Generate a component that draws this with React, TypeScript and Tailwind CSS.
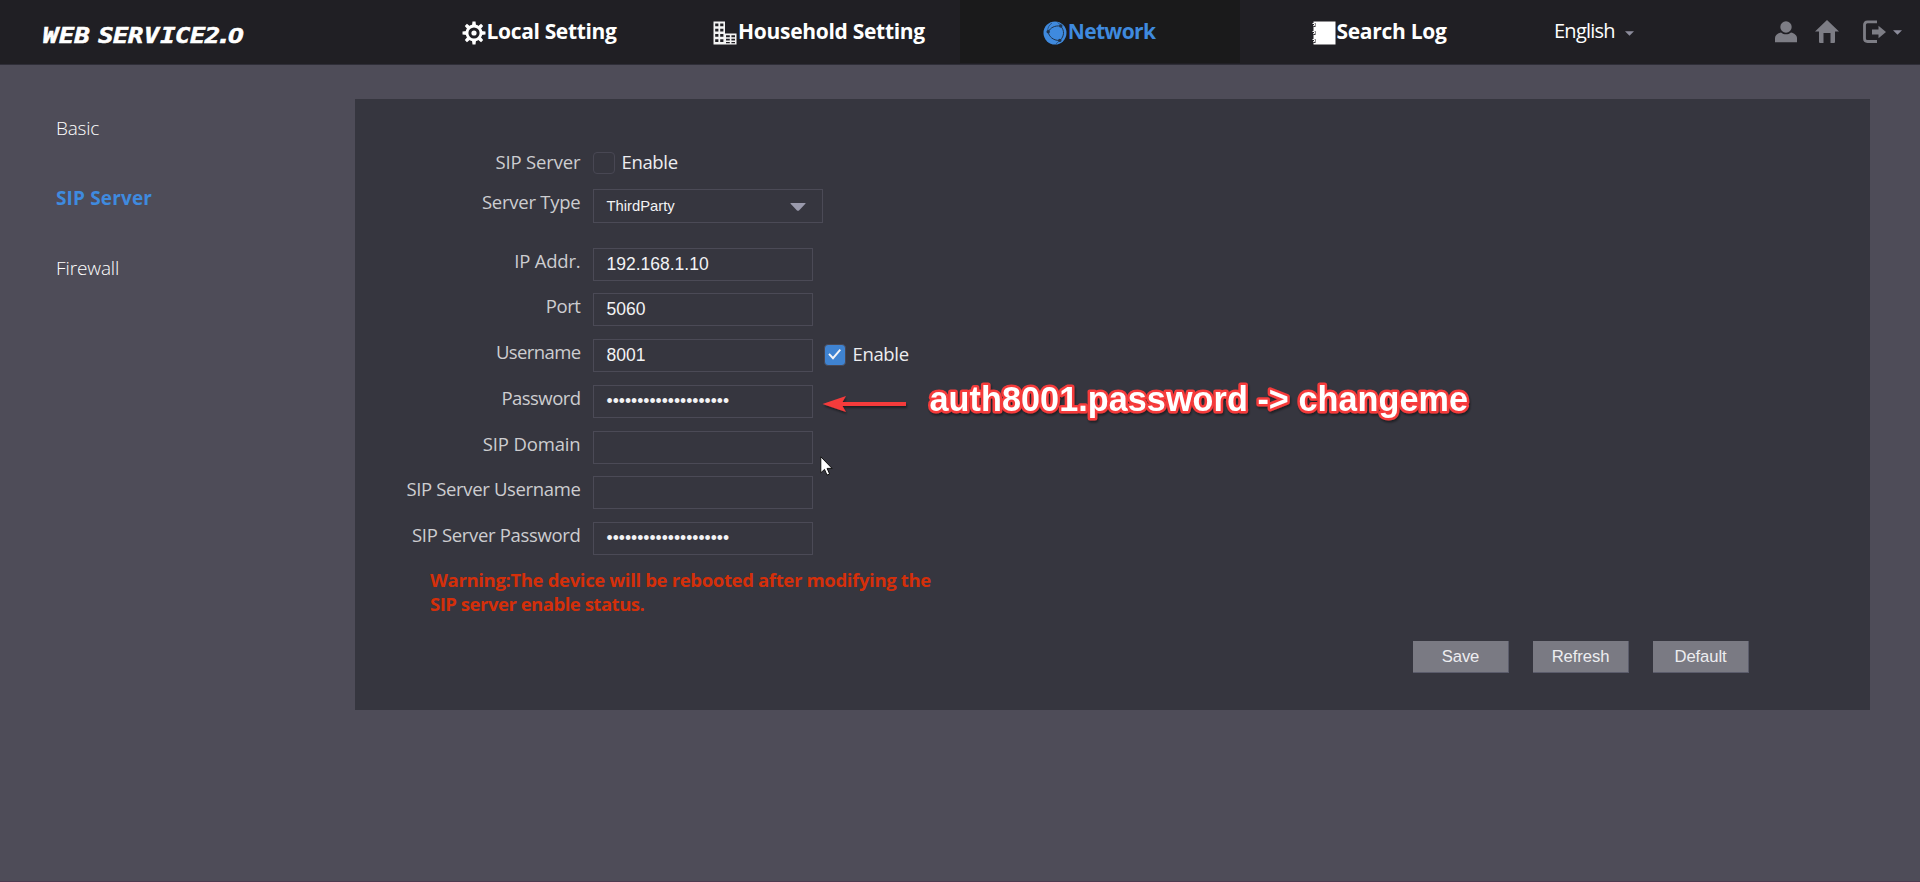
import type { ReactNode } from "react";

const OPEN = "font-['Open_Sans','Noto_Sans',sans-serif]";
const ARIAL = "font-['Liberation_Sans',Arial,sans-serif]";

function Logo() {
  return (
    <svg width="212" height="24" viewBox="0 0 212 24" className="block overflow-visible" fill="#fff">
      <text
        y="19.700"
        transform="scale(1.24 1)"
        fontFamily="DejaVu Sans Mono"
        fontWeight="700"
        fontStyle="oblique"
        fontSize="20.5"
        stroke="#fff"
        strokeWidth="0.6"
        x="0 13 25.500 38 44.500 56.500 68.500 81.500 94.500 106.500 118.500 130.500 142 149"
      >
        WEB SERVICE2<tspan fontFamily="DejaVu Sans">.</tspan>
        <tspan fontFamily="Liberation Sans" fontStyle="italic" fontSize="22.5">0</tspan>
      </text>
    </svg>
  );
}

function GearIcon() {
  const teeth = [0, 45, 90, 135, 180, 225, 270, 315];
  return (
    <svg width="24" height="24" viewBox="0 0 24 24" fill="none">
      <circle cx="12" cy="12" r="7" stroke="#fff" strokeWidth="2.8" />
      <circle cx="12" cy="12" r="2.6" fill="#fff" />
      {teeth.map((a) => (
        <path key={a} d="M10 4.800 10.500 0.500h3l0.500 4.300z" fill="#fff" transform={`rotate(${a} 12 12)`} />
      ))}
    </svg>
  );
}

function BuildingIcon() {
  return (
    <svg width="24" height="24" viewBox="0 0 24 24" fill="none">
      <path
        fill="#f4f4f4"
        fillRule="evenodd"
        d="M0.500 0.500h11.500v23h-11.500zM2.200 2.500v2.800h3.200v-2.800zM7.200 2.500v2.800h3.200v-2.800zM2.200 7.700v2.800h3.200v-2.800zM7.200 7.700v2.800h3.200v-2.800zM2.200 13v2.800h3.200v-2.800zM7.200 13v2.800h3.200v-2.800zM2.200 18.200v2.800h3.200v-2.800zM7.200 18.200v2.800h3.200v-2.800z"
      />
      <path
        fill="#f4f4f4"
        fillRule="evenodd"
        d="M12 12.500h11.500v11h-11.500zM13 14.200v2h3.800v-2zM18.400 14.200v2h3.600v-2zM13 17.800v1.600h3.800v-1.600zM18.400 17.800v1.600h3.600v-1.600zM13 21v1.200h3.800v-1.200zM18.400 21v1.200h3.600v-1.200z"
      />
    </svg>
  );
}

function GlobeIcon() {
  return (
    <svg width="24" height="24" viewBox="0 0 24 24" fill="none">
      <circle cx="12" cy="12" r="11.500" fill="#3f8ade" />
      <g stroke="#20344d" strokeWidth="1">
        <path d="M5.500 10.500C7.500 6.500 12 4.500 17 5" />
        <path d="M5.200 11C6 15.500 10 19.500 16.500 19.500" />
        <path d="M18 5.500C21.500 9.500 21.500 15 17 19.500" />
        <path d="M4.800 10C4.500 7 6 4 9 2" strokeWidth="0.600" />
        <path d="M18.500 4.500 14.500 1.500" strokeWidth="0.600" />
        <path d="M17 19.500 13 22.800" strokeWidth="0.600" />
      </g>
      <g fill="#20344d">
        <circle cx="5.200" cy="10.800" r="1.700" />
        <circle cx="17.800" cy="5" r="1.700" />
        <circle cx="16.800" cy="19.400" r="1.700" />
      </g>
    </svg>
  );
}

function NotebookIcon() {
  return (
    <svg width="24" height="24" viewBox="0 0 24 24" fill="none">
      <path d="M1.500 0.500h22v23h-22z" fill="#fff" />
      {[2.5, 10.5, 18.5].map((y) => (
        <g key={y}>
          <path d={`M0 ${y - 0.5}h3.500v4h-3.500z`} fill="#201f24" />
          <path d={`M0.500 ${y}h2v2.200h-1.500`} stroke="#fff" strokeWidth="1" />
        </g>
      ))}
    </svg>
  );
}

function Caret({ className }: { className: string }) {
  return (
    <svg width="9" height="5" viewBox="0 0 9 5" className={className}>
      <path d="M0 0.200h9L4.500 4.700z" fill="#8c8c9c" />
    </svg>
  );
}

function NavItem({ icon, label, tracking, active }: { icon: ReactNode; label: string; tracking: string; active?: boolean }) {
  return (
    <a className={`flex h-[63px] w-[280px] items-center justify-center pt-[2px] pr-[2px] ${active ? "bg-[#1a1a1b] text-[#3f8ade]" : "text-white"}`}>
      {icon}
      <span className={`-mt-[3px] ml-px whitespace-nowrap text-[21px] leading-[30px] font-bold ${tracking}`}>{label}</span>
    </a>
  );
}

function Header() {
  return (
    <header className="flex h-[65px] border-b border-[#2f2e38] bg-[#201f24]">
      <div className="w-[400px] pt-[23px] pl-[43px]">
        <Logo />
      </div>
      <nav className="flex">
        <NavItem icon={<GearIcon />} label="Local Setting" tracking="tracking-[-0.35px]" />
        <NavItem icon={<BuildingIcon />} label="Household Setting" tracking="tracking-[-0.3px]" />
        <NavItem icon={<GlobeIcon />} label="Network" tracking="tracking-[-0.65px]" active />
        <NavItem icon={<NotebookIcon />} label="Search Log" tracking="tracking-[-0.3px]" />
      </nav>
      <div className="flex pl-[34px]">
        <span className="w-[71px] text-[20px] leading-[62px] tracking-[-0.75px] text-white">English</span>
        <Caret className="mt-[31px]" />
      </div>
      <div className="ml-auto flex pt-[20px] pr-[18px]">
        <svg width="22" height="22" viewBox="0 0 22 22" fill="#7d7d85" className="mt-px mr-[18px]">
          <circle cx="11" cy="6" r="5.700" />
          <path d="M0 21.200v-4.200c0-3 3-4.800 6-5.600 2.800 2.600 7.200 2.600 10 0 3 .8 6 2.600 6 5.600v4.200z" />
        </svg>
        <svg width="24" height="24" viewBox="0 0 24 24" fill="#7d7d85" className="mr-[24px]">
          <path d="M12 0 24 11.500h-4v10c0 1-.5 1.500-1.500 1.500h-3v-10h-7v10H5.500C4.500 23 4 22.500 4 21.500v-10H0z" />
        </svg>
        <svg width="23" height="24" viewBox="0 0 23 24" fill="none" className="mr-[7px]">
          <path d="M14 1.800H4.500Q1.500 1.800 1.500 5v13.500q0 3 3 3H14" stroke="#7d7d85" strokeWidth="2.800" />
          <path d="M9 9.500h6.500V5.800L23 12l-7.500 6.300v-3.700H9z" fill="#7d7d85" />
        </svg>
        <Caret className="mt-[10px]" />
      </div>
    </header>
  );
}

function Sidebar() {
  return (
    <aside className="flex w-[355px] flex-col pl-[56px] text-[19px] text-white">
      <a className="mt-[43px] h-[40px] leading-[40px] font-light tracking-[-0.2px]">Basic</a>
      <a className="mt-[30px] h-[40px] leading-[40px] font-bold tracking-[0.15px] text-[#3f8ade]">SIP Server</a>
      <a className="mt-[30px] h-[40px] leading-[40px] font-light tracking-[-0.1px]">Firewall</a>
    </aside>
  );
}

function Label({ children, className }: { children: string; className: string }) {
  return <label className={`mr-[12.5px] w-[225.5px] shrink-0 text-right text-[18.5px] whitespace-nowrap text-[#cdcdd0] ${className}`}>{children}</label>;
}

function Checkbox({ checked, className }: { checked?: boolean; className: string }) {
  return (
    <span
      className={`flex size-[22px] shrink-0 items-center justify-center rounded-[4px] border border-[#484753] ${checked ? "bg-[#3f83d1]" : ""} ${className}`}
    >
      {checked && (
        <svg width="16" height="16" viewBox="0 0 16 16" fill="none">
          <path d="M2 6.800 6 11.200 13.300 2.600" stroke="#f4f4f6" strokeWidth="1.900" />
        </svg>
      )}
    </span>
  );
}

type Field = { label: string; tracking: string; value: string; height: string; enable?: boolean };

const DOTS = "••••••••••••••••••••";

const FIELDS: Field[] = [
  { label: "IP Addr.", tracking: "tracking-[-0.2px]", value: "192.168.1.10", height: "h-[45px]" },
  { label: "Port", tracking: "tracking-[-0.4px]", value: "5060", height: "h-[46px]" },
  { label: "Username", tracking: "tracking-[-0.6px]", value: "8001", height: "h-[46px]", enable: true },
  { label: "Password", tracking: "tracking-[-0.55px]", value: DOTS, height: "h-[46px]" },
  { label: "SIP Domain", tracking: "tracking-[-0.15px]", value: "", height: "h-[45px]" },
  { label: "SIP Server Username", tracking: "tracking-[-0.35px]", value: "", height: "h-[46px]" },
  { label: "SIP Server Password", tracking: "tracking-[-0.33px]", value: DOTS, height: "h-[46px]" },
];

function FieldRow({ label, tracking, value, height, enable }: Field) {
  return (
    <div className={`flex ${height}`}>
      <Label className={`leading-[26px] ${tracking}`}>{label}</Label>
      <div className={`h-[33px] w-[220px] border border-[#4b4a56] pl-[12.5px] text-[17.5px] leading-[30px] text-[#f2f2f4] ${ARIAL}`}>{value}</div>
      {enable && (
        <>
          <Checkbox checked className="mt-[5px] ml-[11px]" />
          <span className="ml-[6.5px] text-[18.5px] leading-[30px] tracking-[-0.35px] text-[#ededf0]">Enable</span>
        </>
      )}
    </div>
  );
}

function Annotation() {
  return (
    <svg width="664" height="56" viewBox="0 0 664 56" className="pointer-events-none absolute top-[277px] left-[463px]">
      <defs>
        <filter id="soft" x="-5%" y="-20%" width="110%" height="150%">
          <feDropShadow dx="1" dy="2" stdDeviation="1" floodColor="#000" floodOpacity="0.45" />
        </filter>
      </defs>
      <g filter="url(#soft)">
        <path d="M4.500 28 28 20 24.500 26H88v4H24.500L28 36z" fill="#f53b3b" />
        <text
          x="111.500"
          y="34.700"
          textLength="538.500"
          fontFamily="Liberation Sans"
          fontWeight="700"
          fontSize="34.200"
          fill="#fff"
          stroke="#f53b3b"
          strokeWidth="5"
          strokeLinejoin="round"
          paintOrder="stroke"
        >
          {"auth8001.password -> changeme"}
        </text>
      </g>
    </svg>
  );
}

function Cursor() {
  return (
    <svg width="14" height="21" viewBox="0 0 14 21" className="pointer-events-none absolute top-[357px] left-[465px]">
      <path d="M0.800 0.800v16l3.700-3.400 2.500 5.700 2.600-1.100-2.500-5.600h5z" fill="#fff" stroke="#111" strokeWidth="1" />
    </svg>
  );
}

function Panel() {
  return (
    <main className="relative mt-[34px] flex h-[611px] w-[1515px] flex-col bg-[#36363f] pt-[53px]">
      <div className="flex h-[37px]">
        <Label className="leading-[20px] tracking-[-0.15px]">SIP Server</Label>
        <Checkbox className="" />
        <span className="ml-[6.5px] text-[18.5px] leading-[20px] tracking-[-0.35px] text-[#ededf0]">Enable</span>
      </div>
      <div className="flex h-[59px]">
        <Label className="leading-[26px] tracking-[-0.24px]">Server Type</Label>
        <div className={`flex h-[34px] w-[230px] items-center justify-between border border-[#4b4a56] pr-[16px] pl-[12.5px] text-[14.8px] text-[#f2f2f4] ${ARIAL}`}>
          ThirdParty
          <svg width="16" height="8" viewBox="0 0 16 8" className="mt-[2px]">
            <path d="M1 0h14q1 0 .4.700L9 7.400q-1 .8-2 0L.6.700Q0 0 1 0z" fill="#9a9aac" />
          </svg>
        </div>
      </div>
      {FIELDS.map((f) => (
        <FieldRow key={f.label} {...f} />
      ))}
      <p className="ml-[75px] w-[530px] text-[18.5px] leading-[24px] font-bold tracking-[-0.34px] text-[#d42f0a]">
        Warning:The device will be rebooted after modifying the
        <br />
        <span className="tracking-[-0.48px]">SIP server enable status.</span>
      </p>
      <div className="mt-[25px] ml-[1058px] flex gap-[24px]">
        {["Save", "Refresh", "Default"].map((b) => (
          <button
            key={b}
            className={`h-[32px] w-[96px] border-r border-b border-[#5b5c6b] bg-[#7a7a83] text-[16.67px] leading-[29px] tracking-[-0.1px] text-[#ededf0] ${ARIAL}`}
          >
            {b}
          </button>
        ))}
      </div>
      <Annotation />
      <Cursor />
    </main>
  );
}

export default function App() {
  return (
    <div className={`h-[882px] w-[1920px] overflow-hidden border-b border-[#4c3a50] bg-[#4e4c58] ${OPEN}`}>
      <Header />
      <div className="flex">
        <Sidebar />
        <Panel />
      </div>
    </div>
  );
}
